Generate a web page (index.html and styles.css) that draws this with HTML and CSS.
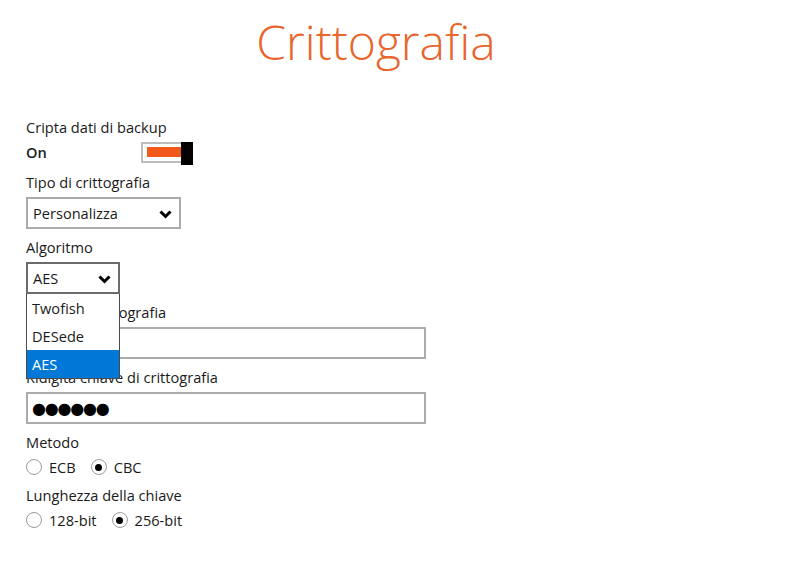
FILE: index.html
```html
<!DOCTYPE html>
<html lang="it">
<head>
<meta charset="UTF-8">
<title>Crittografia</title>
<link rel="stylesheet" href="styles.css">
</head>
<body>

<div class="header">
    <h1 class="page-title">Crittografia</h1>
</div>

<div class="form">
    <div class="field">
        <div class="field-label">Cripta dati di backup</div>
        <div class="toggle-row">
            <span class="toggle-text">On</span>
            <span class="switch">
                <span class="switch-fill"></span>
                <span class="switch-knob"></span>
            </span>
        </div>
    </div>

    <div class="field">
        <div class="field-label">Tipo di crittografia</div>
        <div class="select select-wide">
            <span>Personalizza</span>
            <svg class="chevron" width="13" height="9" viewBox="0 0 13 9"><polyline points="1.5,1.5 6.5,6.5 11.5,1.5" fill="none" stroke="#000" stroke-width="3"/></svg>
        </div>
    </div>

    <div class="field">
        <div class="field-label">Algoritmo</div>
        <div class="select-wrap">
            <div class="select select-narrow select-open">
                <span>AES</span>
                <svg class="chevron" width="13" height="9" viewBox="0 0 13 9"><polyline points="1.5,1.5 6.5,6.5 11.5,1.5" fill="none" stroke="#000" stroke-width="3"/></svg>
            </div>
            <ul class="dropdown">
                <li>Twofish</li>
                <li>DESede</li>
                <li class="selected">AES</li>
            </ul>
        </div>
    </div>

    <div class="field">
        <div class="field-label">Chiave di crittografia</div>
        <div class="text-input"></div>
    </div>

    <div class="field">
        <div class="field-label">Ridigita chiave di crittografia</div>
        <div class="text-input"><span class="dots">●●●●●●</span></div>
    </div>

    <div class="field">
        <div class="field-label">Metodo</div>
        <div class="radio-row">
            <span class="radio"></span><span class="radio-text">ECB</span>
            <span class="radio checked"></span><span class="radio-text">CBC</span>
        </div>
    </div>

    <div class="field">
        <div class="field-label">Lunghezza della chiave</div>
        <div class="radio-row">
            <span class="radio"></span><span class="radio-text">128-bit</span>
            <span class="radio checked"></span><span class="radio-text">256-bit</span>
        </div>
    </div>
</div>

</body>
</html>
```

FILE: styles.css
```css
body {
    margin: 0;
    padding: 0;
    background-color: #ffffff;
    color: #1a1a1a;
    font-family: "Open Sans", "Noto Sans", sans-serif;
    font-size: 14.6px;
}

/* titolo */
.header {
    padding-right: 60px;
    text-align: center;
}

.page-title {
    margin: 0;
    padding-top: 14px;
    height: 117px;
    box-sizing: border-box;
    font-size: 48px;
    font-weight: 300;
    line-height: 56px;
    color: #e8652d;
}

.form {
    padding-left: 26px;
}

.field {
    margin-bottom: 8px;
}

.field-label {
    line-height: 20px;
    margin-bottom: 5px;
}

/* interruttore */
.toggle-row {
    display: flex;
    align-items: center;
    height: 24px;
    margin-top: -2px;
}

.toggle-text {
    width: 115px;
    font-weight: 600;
}

.switch {
    position: relative;
    display: flex;
    align-items: center;
    width: 52px;
    height: 21px;
    border: 2px solid #bdbdbd;
    box-sizing: border-box;
    padding-left: 4px;
}

.switch-fill {
    width: 35px;
    height: 10px;
    background-color: #f25a1b;
}

.switch-knob {
    position: absolute;
    right: -2px;
    top: -2px;
    width: 12px;
    height: 23px;
    background-color: #000;
}

/* select */
.select {
    display: flex;
    align-items: center;
    justify-content: space-between;
    height: 32px;
    border: 2px solid #ababab;
    box-sizing: border-box;
    padding: 0 7px 0 5px;
}

.select-wide {
    width: 155px;
}

.select-narrow {
    width: 94px;
}

.select-open {
    border-color: #6b6b6b;
}

.chevron {
    margin-top: 2px;
}

.select-wrap {
    position: relative;
}

.dropdown {
    position: absolute;
    left: 0;
    top: 32px;
    z-index: 2;
    width: 94px;
    margin: 0;
    padding: 0;
    list-style: none;
    background-color: #fff;
    border: 1px solid #4a4a4a;
    border-top: none;
    box-sizing: border-box;
}

.dropdown li {
    height: 28px;
    line-height: 28px;
    padding-left: 5px;
}

.dropdown li.selected {
    background-color: #0078d7;
    color: #fff;
}

/* campi di testo */
.text-input {
    display: flex;
    align-items: center;
    width: 400px;
    height: 32px;
    border: 2px solid #ababab;
    box-sizing: border-box;
    padding-left: 4px;
}

.dots {
    font-family: "DejaVu Sans", sans-serif;
    font-size: 16px;
    letter-spacing: -1.2px;
    color: #000;
}

/* radio */
.radio-row {
    display: flex;
    align-items: center;
    height: 20px;
}

.radio {
    display: flex;
    align-items: center;
    justify-content: center;
    width: 16px;
    height: 16px;
    border: 1.5px solid #9b9b9b;
    border-radius: 50%;
    box-sizing: border-box;
    margin-right: 7px;
}

.radio.checked::after {
    content: "";
    width: 7px;
    height: 7px;
    border-radius: 50%;
    background-color: #000;
}

.radio-text {
    margin-right: 15px;
}
```
